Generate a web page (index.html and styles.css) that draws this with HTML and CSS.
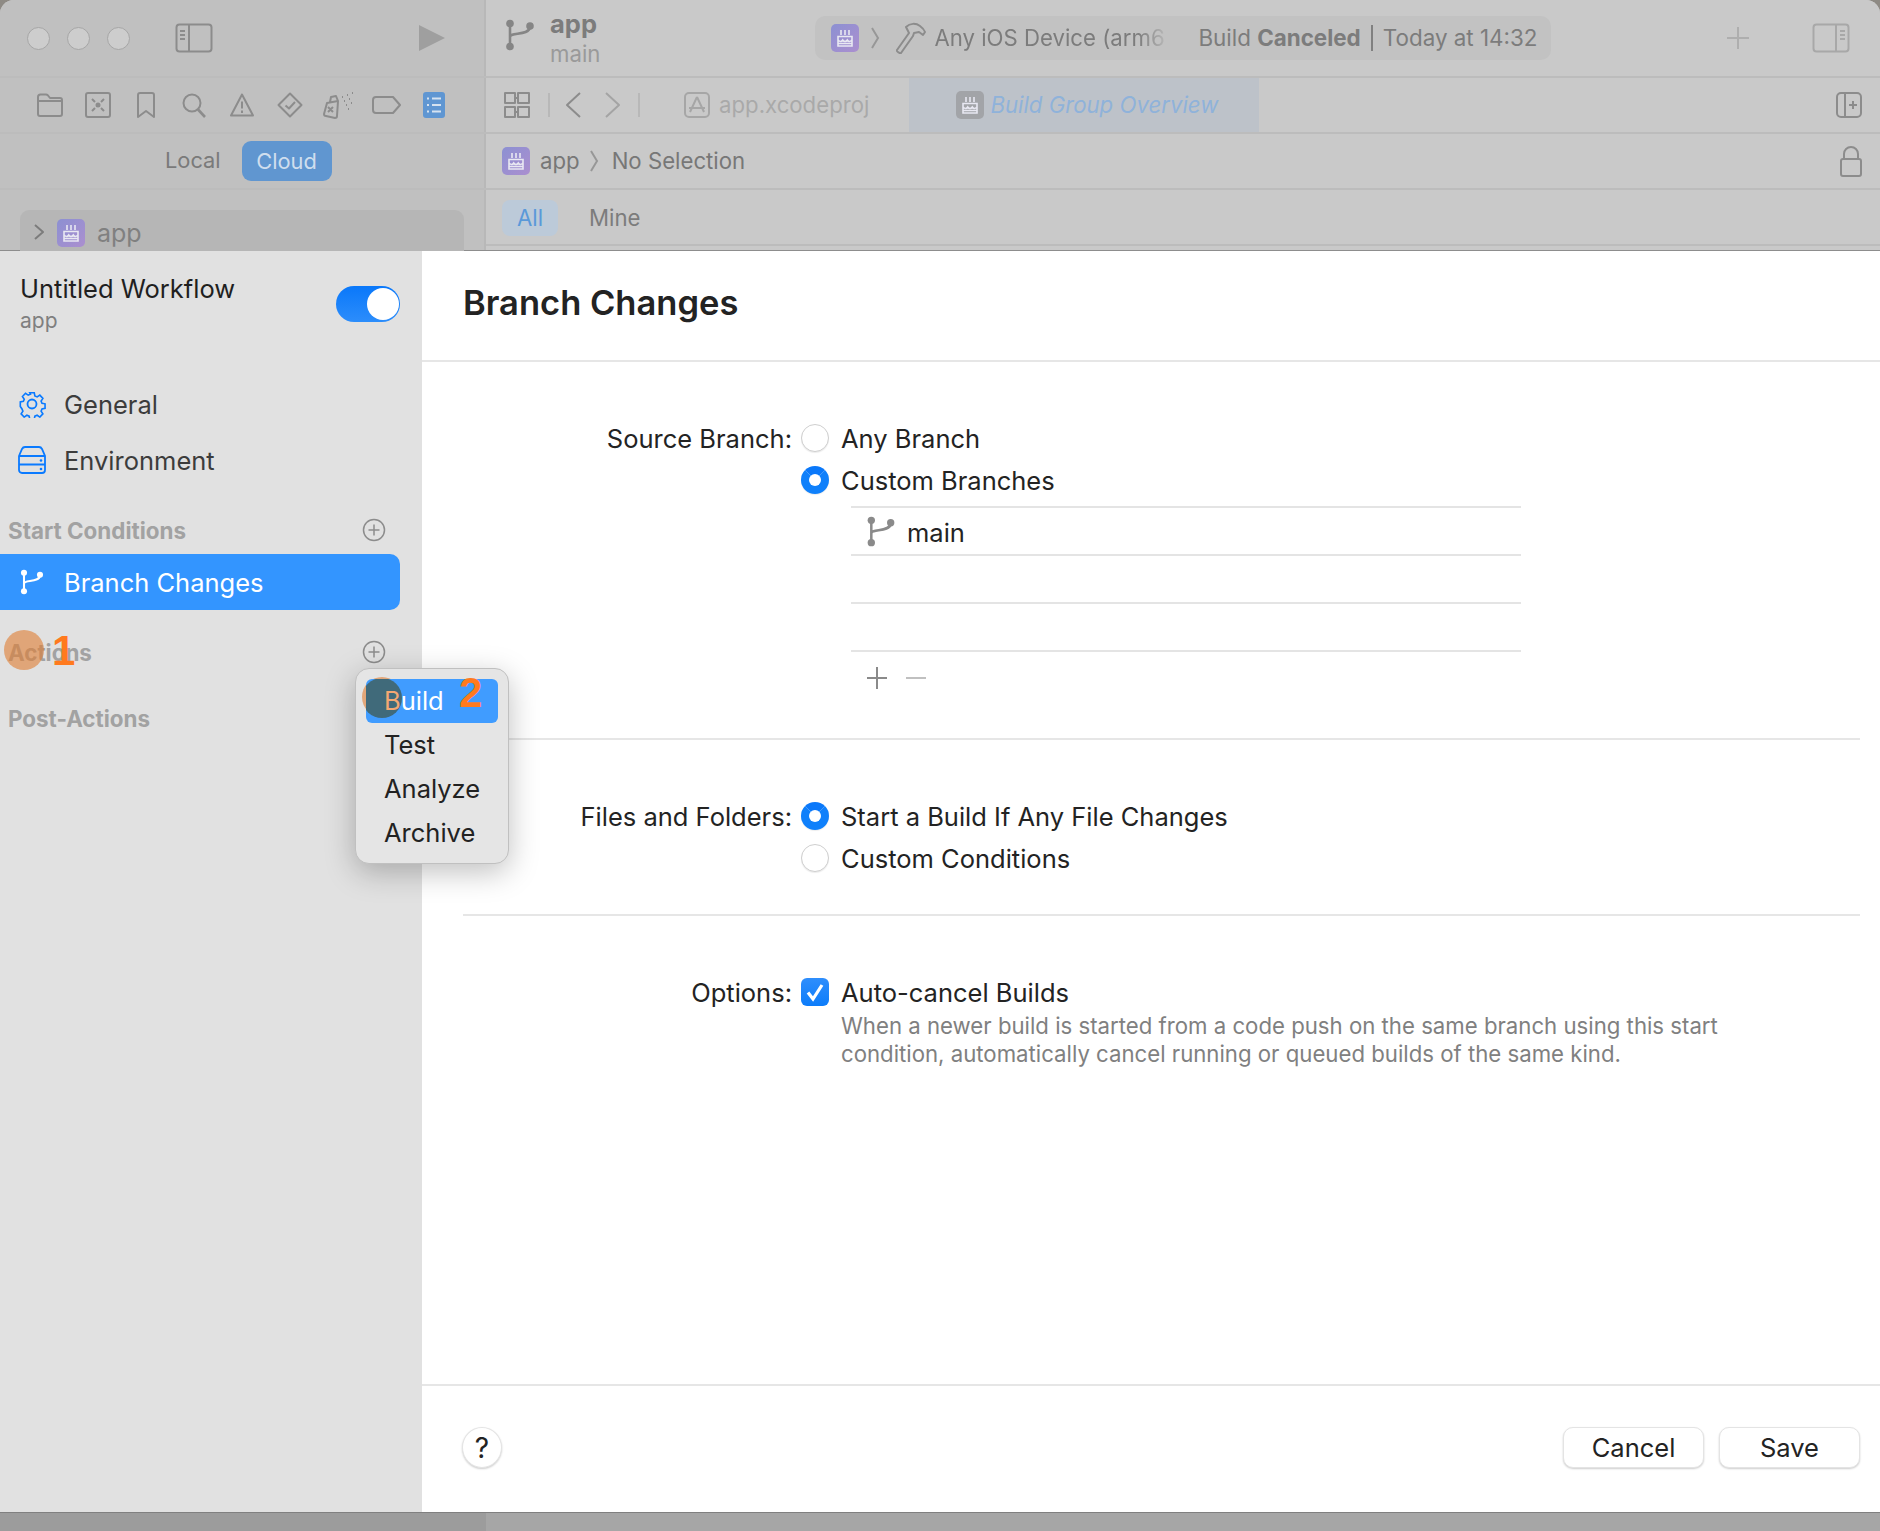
FILE: index.html
```html
<!DOCTYPE html>
<html lang="en">
<head>
    <meta charset="UTF-8">
    <meta name="viewport" content="width=device-width, initial-scale=1.0">
    <title>Branch Changes</title>
    <link rel="stylesheet" href="styles.css">
</head>
<body>

<svg class="defs" width="0" height="0">
    <defs>
        <linearGradient id="cakeFill" x1="0" y1="0" x2="1" y2="1">
            <stop offset="0" stop-color="#8c90d2"/>
            <stop offset="1" stop-color="#ab8fcf"/>
        </linearGradient>
        <symbol id="cake" viewBox="0 0 28 28">
            <g fill="none" stroke="#e8e8f2" stroke-width="1.600">
                <path d="M10 6v5M14 6v5M18 6v5"/>
                <path d="M7 12.500h14v9.500H7zM7 16c2 2 3.500 2 4.700 0 1.300 2 3.300 2 4.600 0 1.200 2 2.700 2 4.700 0M7 19.500h14"/>
            </g>
        </symbol>
        <symbol id="branch" viewBox="0 0 30 32">
            <g fill="none" stroke="currentColor" stroke-width="2.600">
                <path d="M5 5v22M5 18c0-5 19-1 20-10"/>
            </g>
            <circle cx="5" cy="4.500" r="3.800" fill="currentColor"/>
            <circle cx="5" cy="27.500" r="3.800" fill="currentColor"/>
            <circle cx="25" cy="7" r="3.800" fill="currentColor"/>
        </symbol>
        <symbol id="plusCircle" viewBox="0 0 24 24">
            <g fill="none" stroke="#8c8c8c" stroke-width="1.500">
                <circle cx="12" cy="12" r="10.500"/>
                <path d="M12 6.500v11M6.500 12h11"/>
            </g>
        </symbol>
        <symbol id="crumb" viewBox="0 0 10 22">
            <path d="M2 1l6 10-6 10" fill="none" stroke="#979797" stroke-width="2"/>
        </symbol>
    </defs>
</svg>

<div class="window">
    <div class="backdrop">
        <div class="bar bar-tool">
            <div class="bar-left">
                <div class="lights"><i></i><i></i><i></i></div>
                <svg class="ico side-toggle" width="38" height="30" viewBox="0 0 38 30"><rect x="1.500" y="1.500" width="35" height="27" rx="3"/><path d="M14 2v26M5 8h5M5 12h5M5 16h5"/></svg>
                <svg class="play" width="28" height="30" viewBox="0 0 28 30"><path d="M1 2l26 13L1 28z"/></svg>
            </div>
            <div class="bar-right">
                <svg class="repo-ico" width="30" height="32"><use href="#branch"/></svg>
                <div class="repo">
                    <b>app</b>
                    <span>main</span>
                </div>
                <div class="status">
                    <svg class="cake" width="28" height="28"><rect width="28" height="28" rx="5" fill="url(#cakeFill)"/><use href="#cake"/></svg>
                    <svg class="crumb-sep" width="10" height="22"><use href="#crumb"/></svg>
                    <svg class="ico hammer" width="30" height="32" viewBox="0 0 30 32"><path d="M1 28L13 11 10 5c4-4 10-4 14-1 2 1.500 4 3 5 6l-2 3-4-3-5 1-1 3L5 31c-1 1-5-2-4-3z"/></svg>
                    <span class="device">Any iOS Device (arm6</span>
                    <span class="build">Build <b>Canceled</b> <em></em> Today at 14:32</span>
                </div>
                <div class="tool-end">
                    <svg class="ico" width="24" height="24" viewBox="0 0 24 24"><path d="M12 1v22M1 12h22"/></svg>
                    <svg class="ico" width="38" height="30" viewBox="0 0 38 30"><rect x="1.500" y="1.500" width="35" height="27" rx="3"/><path d="M24 2v26M28 8h5M28 12h5M28 16h5"/></svg>
                </div>
            </div>
        </div>

        <div class="bar bar-tabs">
            <div class="bar-left nav-icons">
                <svg class="ico" width="26" height="24" viewBox="0 0 26 24"><path d="M1 21V4c0-1.500 1-2.500 2.500-2.500H9c1 0 1.500.5 2 1L13 5h10c1.200 0 2 .8 2 2v14c0 1-.8 2-2 2H3c-1.200 0-2-1-2-2zM1 8h24"/></svg>
                <svg class="ico" width="26" height="26" viewBox="0 0 26 26"><rect x="1" y="1" width="24" height="24" rx="2"/><circle cx="13" cy="13" r="2.500" fill="#8c8c8c" stroke="none"/><path d="M7 7l3 3M19 7l-3 3M7 19l3-3M19 19l-3-3"/></svg>
                <svg class="ico" width="18" height="26" viewBox="0 0 18 26"><path d="M3 1h12c1 0 2 1 2 2v22l-8-6-8 6V3c0-1 1-2 2-2z"/></svg>
                <svg class="ico" width="24" height="25" viewBox="0 0 24 25"><circle cx="10" cy="10" r="8.500"/><path d="M16 16.500l7 7.500" stroke-width="2.600"/></svg>
                <svg class="ico" width="24" height="24" viewBox="0 0 24 24"><path d="M12 1.500L1 22.500h22zM12 8.500v7M12 17.500v2.500"/></svg>
                <svg class="ico" width="26" height="26" viewBox="0 0 26 26"><path d="M13 1.500L24.500 13 13 24.500 1.500 13zM8.500 13.500l3.500 3 6-6.500"/></svg>
                <svg class="ico" width="31" height="27" viewBox="0 0 31 27"><path d="M4 11l11-2-1 15c0 1-1 2-2 2l-9-2c-1 0-2-1-2-2zM7 10l1-5 5-1 2 5M5 15l5 5M10 15l-5 5"/><path class="dots" d="M19 5h1M24 3h1M29 1h1M21 9h1M26 7h1M23 13h1M28 11h1M25 17h1"/></svg>
                <svg class="ico" width="29" height="18" viewBox="0 0 29 18"><path d="M4 1h17l7 8-7 8H4c-1.500 0-3-1-3-3V4c0-2 1.500-3 3-3z"/></svg>
                <svg class="list-ico" width="22" height="26" viewBox="0 0 22 26"><rect width="22" height="26" rx="3" fill="#5f96d2"/><path d="M4 6.500h2M9 6.500h9M4 13h2M9 13h9M4 19.500h2M9 19.500h9" stroke="#d5e2f0" stroke-width="2"/></svg>
            </div>
            <div class="bar-right">
                <svg class="ico grid-ico" width="26" height="26" viewBox="0 0 26 26"><path d="M1 1h10v10H1zM14 1h11v10H14zM1 15h10v10H1zM14 15h11v10H14zM11 6h3M14 20h-3"/></svg>
                <span class="vrule rule-a"></span>
                <svg class="ico nav-back" width="18" height="26" viewBox="0 0 18 26"><path d="M16 1L3 13l13 12"/></svg>
                <svg class="ico nav-next" width="18" height="26" viewBox="0 0 18 26"><path d="M2 1l13 12L2 25"/></svg>
                <span class="vrule rule-b"></span>
                <div class="tab">
                    <svg class="ico" width="26" height="26" viewBox="0 0 26 26"><rect x="1" y="1" width="24" height="24" rx="4"/><path d="M13 5L6 20M13 5l7 15M5 16h16"/></svg>
                    <span>app.xcodeproj</span>
                </div>
                <div class="tab tab-active">
                    <svg class="cake-grey" width="28" height="28"><rect width="28" height="28" rx="5" fill="#a2a4a8"/><use href="#cake"/></svg>
                    <span>Build Group Overview</span>
                </div>
                <svg class="ico tab-end" width="26" height="26" viewBox="0 0 26 26"><rect x="1" y="1" width="24" height="24" rx="4"/><path d="M9 1v24M13 13h8M17 9v8"/></svg>
            </div>
        </div>

        <div class="bar bar-path">
            <div class="bar-left seg">
                <span>Local</span>
                <span class="seg-on">Cloud</span>
            </div>
            <div class="bar-right">
                <svg class="cake" width="28" height="28"><rect width="28" height="28" rx="5" fill="url(#cakeFill)"/><use href="#cake"/></svg>
                <span class="path-name">app</span>
                <svg class="crumb-sep" width="10" height="22"><use href="#crumb"/></svg>
                <span class="path-name">No Selection</span>
                <svg class="ico lock" width="24" height="32" viewBox="0 0 24 32"><rect x="2" y="14" width="20" height="17" rx="2"/><path d="M5 14V9a7 7 0 0 1 14 0v5"/></svg>
            </div>
        </div>

        <div class="bar bar-filter">
            <div class="bar-left">
                <div class="app-row">
                    <svg class="ico" width="12" height="18" viewBox="0 0 12 18"><path d="M2 2l8 7-8 7"/></svg>
                    <svg class="cake" width="28" height="28"><rect width="28" height="28" rx="5" fill="url(#cakeFill)"/><use href="#cake"/></svg>
                    <span>app</span>
                </div>
            </div>
            <div class="bar-right">
                <span class="filter-on">All</span>
                <span class="filter">Mine</span>
            </div>
        </div>
    </div>

    <div class="dialog">
        <aside class="sidebar">
            <div class="wf-head">
                <div>
                    <div class="wf-title">Untitled Workflow</div>
                    <div class="wf-sub">app</div>
                </div>
                <span class="toggle"></span>
            </div>

            <div class="side-item">
                <svg width="28" height="28" viewBox="0 0 28 28"><g fill="none" stroke="#0a7aff" stroke-width="1.800"><circle cx="14" cy="14" r="4.500"/><path d="M11.500 1.500h5l.7 3.600 2.500 1 3-2 3.400 3.600-2 3 1 2.400 3.400.7v5l-3.400.7-1 2.400 2 3-3.400 3.600-3-2-2.500 1-.7 3.400h-5l-.7-3.400-2.500-1-3 2-3.400-3.600 2-3-1-2.400L1 16.800v-5l3.400-.7 1-2.400-2-3 3.400-3.600 3 2 2.500-1z" transform="translate(1.400 1.400) scale(.9)"/></g></svg>
                <span>General</span>
            </div>
            <div class="side-item">
                <svg width="28" height="28" viewBox="0 0 28 28"><g fill="none" stroke="#0a7aff" stroke-width="1.800"><path d="M1 10l3-7c.5-1 1.500-2 3-2h14c1.500 0 2.500 1 3 2l3 7v14a3 3 0 0 1-3 3H4a3 3 0 0 1-3-3zM1 10h26M1 18.500h26"/></g><circle cx="23" cy="14.500" r="1.300" fill="#0a7aff"/><circle cx="23" cy="23" r="1.300" fill="#0a7aff"/></svg>
                <span>Environment</span>
            </div>

            <div class="side-group group-start">
                <span>Start Conditions</span>
                <svg width="24" height="24"><use href="#plusCircle"/></svg>
            </div>
            <div class="side-item side-active">
                <svg width="24" height="26"><use href="#branch"/></svg>
                <span>Branch Changes</span>
            </div>
            <div class="side-group group-actions">
                <span>Actions</span>
                <svg width="24" height="24"><use href="#plusCircle"/></svg>
            </div>
            <div class="side-group group-post">
                <span>Post-Actions</span>
            </div>
        </aside>

        <main class="main">
            <h1 class="title">Branch Changes</h1>

            <div class="form">
                <section class="sect sect-source">
                    <div class="row">
                        <span class="lbl">Source Branch:</span>
                        <span class="radio"></span>
                        <span>Any Branch</span>
                    </div>
                    <div class="row">
                        <span class="lbl"></span>
                        <span class="radio radio-on"></span>
                        <span>Custom Branches</span>
                    </div>
                    <div class="branch-list">
                        <div class="branch-row">
                            <svg width="30" height="31"><use href="#branch"/></svg>
                            <span>main</span>
                        </div>
                        <div class="branch-row"></div>
                        <div class="branch-row"></div>
                    </div>
                    <div class="list-tools">
                        <svg width="20" height="22" viewBox="0 0 20 22"><path d="M10 0v22M0 11h20" stroke="#8a8a8a" stroke-width="2"/></svg>
                        <svg width="20" height="22" viewBox="0 0 20 22"><path d="M0 11h20" stroke="#c0c0c0" stroke-width="2"/></svg>
                    </div>
                </section>

                <section class="sect sect-files">
                    <div class="row">
                        <span class="lbl">Files and Folders:</span>
                        <span class="radio radio-on"></span>
                        <span>Start a Build If Any File Changes</span>
                    </div>
                    <div class="row">
                        <span class="lbl"></span>
                        <span class="radio"></span>
                        <span>Custom Conditions</span>
                    </div>
                </section>

                <section class="sect-options">
                    <div class="row">
                        <span class="lbl">Options:</span>
                        <span class="check">
                            <svg width="20" height="20" viewBox="0 0 20 20"><path d="M3 10.500l5 6.500L17 3" fill="none" stroke="#fff" stroke-width="3.200"/></svg>
                        </span>
                        <span>Auto-cancel Builds</span>
                    </div>
                    <p class="hint">When a newer build is started from a code push on the same branch using this start<br>condition, automatically cancel running or queued builds of the same kind.</p>
                </section>
            </div>

            <footer class="foot">
                <button class="btn-help">?</button>
                <div class="foot-btns">
                    <button class="btn">Cancel</button>
                    <button class="btn">Save</button>
                </div>
            </footer>
        </main>

        <div class="menu">
            <i class="spot spot-two"></i>
            <div class="menu-item menu-on"><i class="spot-in"></i><span><span class="spot-letter">B</span>uild</span></div>
            <div class="menu-item">Test</div>
            <div class="menu-item">Analyze</div>
            <div class="menu-item">Archive</div>
        </div>
        <i class="spot spot-one"></i>
        <span class="step step-one">1</span>
        <span class="step step-two">2</span>
    </div>

    <div class="strip"><div></div><div></div></div>
</div>

</body>
</html>
```

FILE: styles.css
```css
* {
    box-sizing: border-box;
}
body {
    margin: 0;
    background-color: #8e8a84;
    color: #232323;
    font-family: Inter, "Noto Sans", sans-serif;
    font-size: 25.5px;
}
.defs {
    position: absolute;
}
.window {
    width: 1880px;
    height: 1531px;
    display: flex;
    flex-direction: column;
    overflow: hidden;
    border-radius: 14px 14px 0 0;
    background-color: #c9c9c9;
}

/* dimmed xcode window behind the sheet */
.backdrop {
    height: 251px;
    flex: none;
    display: flex;
    flex-direction: column;
    color: #7c7c7c;
    font-size: 22.2px;
    border-bottom: 1px solid #8d8d8d;
}
.bar {
    display: flex;
    flex: none;
    border-bottom: 2px solid #bcbcbc;
}
.bar-tool { height: 78px; }
.bar-tabs { height: 56px; }
.bar-path { height: 56px; }
.bar-filter { height: 60px; border-bottom: none; }
.bar-left {
    width: 486px;
    flex: none;
    display: flex;
    align-items: center;
    background-color: #c0c0c0;
    border-right: 2px solid #b8b8b8;
}
.bar-right {
    flex: 1;
    display: flex;
    align-items: center;
    padding-left: 16px;
    background-color: #c9c9c9;
}
.ico {
    flex: none;
    fill: none;
    stroke: #8c8c8c;
    stroke-width: 2;
    stroke-linejoin: round;
}
.cake, .cake-grey, .crumb-sep {
    flex: none;
}
.lights {
    display: flex;
    gap: 17px;
    padding-left: 27px;
}
.lights i {
    width: 23px;
    height: 23px;
    border-radius: 50%;
    background-color: #cdcdcd;
    border: 1px solid #a6a6a6;
}
.side-toggle {
    margin-left: 45px;
}
.play {
    margin-left: 205px;
    fill: #9f9f9f;
}
.repo-ico {
    color: #858585;
    flex: none;
    margin: -6px 0 0 3px;
}
.repo {
    margin-left: 15px;
    display: flex;
    flex-direction: column;
    line-height: 30px;
    margin-top: 1px;
}
.repo b {
    font-size: 25.5px;
}
.repo span {
    color: #9a9a9a;
}
.status {
    width: 736px;
    height: 44px;
    margin-left: 215px;
    padding-left: 16px;
    display: flex;
    align-items: center;
    background-color: #c2c2c2;
    border-radius: 10px;
    margin-top: -1px;
}
.status .crumb-sep {
    margin: 0 16px 0 11px;
}
.device {
    width: 232px;
    margin-left: 8px;
    white-space: nowrap;
    overflow: hidden;
    -webkit-mask-image: linear-gradient(to right, #000 88%, transparent 102%);
    mask-image: linear-gradient(to right, #000 88%, transparent 102%);
}
.build {
    margin-left: 32px;
    font-size: 22.4px;
    white-space: nowrap;
}
.build em {
    display: inline-block;
    width: 1.500px;
    height: 26px;
    margin: 0 4px;
    vertical-align: -5px;
    background-color: #808080;
}
.tool-end {
    margin-left: auto;
    padding-right: 30px;
    display: flex;
    align-items: center;
    gap: 62px;
}
.tool-end svg:first-child {
    stroke: #aeaeae;
}
.tool-end svg:last-child {
    stroke: #a8a8a8;
}

.nav-icons {
    display: grid;
    grid-template-columns: repeat(9, 48px);
    justify-items: center;
    align-items: center;
    padding-left: 26px;
}
.nav-icons .dots {
    stroke-dasharray: 1 1;
}
.grid-ico {
    margin-left: 2px;
}
.vrule {
    width: 2px;
    height: 24px;
    flex: none;
    background-color: #b8b8b8;
}
.rule-a { margin-left: 18px; }
.rule-b { margin-left: 16px; }
.nav-back {
    margin-left: 14px;
}
.nav-next {
    margin-left: 22px;
    stroke: #a4a4a4;
}
.tab {
    display: flex;
    align-items: center;
    height: 100%;
    margin-left: 44px;
    gap: 9px;
    color: #a9a9a9;
}
.tab span {
    margin-top: -2px;
}
.tab .ico {
    stroke: #a6a6a6;
}
.tab-active {
    width: 350px;
    padding-left: 47px;
    margin-left: 40px;
    gap: 6px;
    background-color: #bdc2c9;
    color: #8fb2da;
    font-style: italic;
}
.tab-end {
    margin-left: auto;
    margin-right: 18px;
}

.seg {
    padding-left: 165px;
    gap: 21px;
    font-size: 21.8px;
    color: #7a7a7a;
}
.seg span:first-child {
    margin-top: -2px;
}
.seg-on {
    width: 90px;
    height: 40px;
    line-height: 40px;
    text-align: center;
    margin-top: -1px;
    background-color: #6096d0;
    color: #cfdeee;
    border-radius: 9px;
}
.path-name {
    margin-top: -2px;
    color: #777;
}
.bar-path .cake {
    margin-right: 10px;
}
.bar-path .crumb-sep {
    margin: 0 13px 0 9px;
}
.lock {
    margin-left: auto;
    margin-right: 17px;
}

.bar-filter .bar-left {
    align-items: flex-start;
}
.app-row {
    width: 444px;
    height: 50px;
    margin: 20px 0 0 20px;
    padding-left: 13px;
    display: flex;
    align-items: flex-start;
    gap: 12px;
    background-color: #b6b6b6;
    border-radius: 9px;
    color: #808080;
    font-size: 25px;
}
.app-row .ico {
    margin-top: 13px;
    stroke: #7c7c7c;
}
.app-row .cake {
    margin-top: 9px;
}
.app-row span {
    margin-top: 8px;
}
.bar-filter .bar-right {
    align-items: flex-start;
    padding-top: 10px;
    border-bottom: 2px solid #bcbcbc;
    height: 56px;
}
.filter-on {
    width: 56px;
    height: 36px;
    line-height: 36px;
    text-align: center;
    background-color: #bccad9;
    color: #5a99d9;
    border-radius: 8px;
}
.filter {
    margin-left: 31px;
    line-height: 36px;
    color: #7c7c7c;
}

/* sheet */
.dialog {
    flex: 1;
    display: flex;
    position: relative;
    min-height: 0;
}
.sidebar {
    width: 422px;
    flex: none;
    background-color: #e1e1e1;
}
.wf-head {
    display: flex;
    justify-content: space-between;
    padding: 22px 22px 0 20px;
    height: 125px;
}
.wf-title {
    color: #1f1f1f;
    line-height: 32px;
}
.wf-sub {
    color: #7f7f7f;
    font-size: 21px;
    line-height: 32px;
}
.toggle {
    width: 64px;
    height: 36px;
    margin-top: 13px;
    position: relative;
    border-radius: 18px;
    background: linear-gradient(#0a78fa, #2c8dfb);
}
.toggle::after {
    content: "";
    position: absolute;
    right: 1px;
    top: 2px;
    width: 32px;
    height: 32px;
    border-radius: 50%;
    background-color: #fff;
}
.side-item {
    display: flex;
    align-items: center;
    gap: 18px;
    height: 56px;
    padding-left: 18px;
    color: #3c3c3c;
}
.side-group {
    display: flex;
    align-items: center;
    justify-content: space-between;
    padding: 0 36px 0 8px;
    height: 24px;
    color: #a2a2a2;
    font-weight: 700;
    font-size: 22.400px;
}
.group-start { margin-top: 30px; }
.group-actions { margin-top: 30px; }
.group-post { margin-top: 42px; }
.side-active {
    width: 400px;
    margin-top: 12px;
    padding-left: 20px;
    gap: 20px;
    border-radius: 0 10px 10px 0;
    background-color: #3395ff;
    color: #fff;
}

.main {
    flex: 1;
    display: flex;
    flex-direction: column;
    background-color: #fff;
}
.title {
    margin: 0;
    height: 111px;
    padding: 30px 0 0 41px;
    font-size: 34.500px;
    line-height: 44px;
    font-weight: 600;
    color: #232323;
    border-bottom: 2px solid #e6e6e6;
}
.form {
    flex: 1;
}
.sect {
    margin: 0 20px 0 41px;
    border-bottom: 2px solid #e6e6e6;
}
.sect-source {
    height: 378px;
    padding-top: 55px;
}
.sect-files {
    height: 176px;
    padding-top: 55px;
}
.sect-options {
    padding-top: 55px;
    margin: 0 20px 0 41px;
}
.row {
    display: flex;
    align-items: center;
    height: 42px;
}
.lbl {
    width: 329px;
    flex: none;
    text-align: right;
    white-space: nowrap;
}
.radio {
    width: 28px;
    height: 28px;
    flex: none;
    margin: 0 12px 0 9px;
    background-color: #fff;
    border: 1px solid #cfcfcf;
    border-radius: 50%;
    box-shadow: 0 1px 1px rgba(0, 0, 0, 0.08);
}
.radio-on {
    border: 8px solid #0f80fb;
    border-top-color: #0a78fa;
}
.check {
    width: 28px;
    height: 28px;
    flex: none;
    margin: 0 12px 0 9px;
    display: flex;
    align-items: center;
    justify-content: center;
    background: linear-gradient(#2f8efc, #0c7cfa);
    border-radius: 6px;
}
.branch-list {
    margin: 5px 0 0 388px;
    width: 670px;
    border-top: 2px solid #e4e4e4;
}
.branch-row {
    height: 48px;
    display: flex;
    align-items: center;
    gap: 11px;
    padding-left: 15px;
    border-bottom: 2px solid #e4e4e4;
}
.branch-row span {
    margin-top: 3px;
}
.branch-row svg {
    color: #8a8a8a;
}
.list-tools {
    display: flex;
    gap: 19px;
    margin: 15px 0 0 404px;
}
.hint {
    margin: -1px 0 0 378px;
    font-size: 22.200px;
    line-height: 28px;
    color: #808080;
    white-space: nowrap;
}
.foot {
    height: 128px;
    margin-top: auto;
    display: flex;
    justify-content: space-between;
    padding: 41px 20px 0 40px;
    border-top: 2px solid #e6e6e6;
}
.btn, .btn-help {
    height: 41px;
    padding: 0;
    font: inherit;
    color: #232323;
    background-color: #fff;
    border: 1px solid #e4e4e4;
    box-shadow: 0 1px 2px rgba(0, 0, 0, 0.2);
}
.btn-help {
    width: 40px;
    border-radius: 50%;
    font-size: 28px;
}
.foot-btns {
    display: flex;
    gap: 15px;
}
.btn {
    width: 141px;
    border-radius: 10px;
}
.strip {
    height: 19px;
    flex: none;
    display: flex;
    border-top: 1px solid #808080;
    background-color: #a6a6a6;
}
.strip div:first-child {
    width: 486px;
    background-color: #9c9c9c;
}

/* popup + tutorial marks */
.menu {
    position: absolute;
    left: 355px;
    top: 417px;
    width: 154px;
    height: 196px;
    padding: 10px;
    background-color: #e5e5e5;
    border: 1px solid #c0c0c0;
    border-radius: 14px;
    box-shadow: 0 8px 30px rgba(0, 0, 0, 0.25);
}
.menu-item {
    height: 44px;
    line-height: 44px;
    padding-left: 18px;
    position: relative;
    overflow: hidden;
    color: #222;
}
.menu-on {
    background-color: #409cff;
    color: #fff;
    border-radius: 6px;
}
.menu-on span {
    position: relative;
}
.spot-in {
    position: absolute;
    left: -4px;
    top: -1px;
    width: 40px;
    height: 40px;
    border-radius: 50%;
    background-color: #406a7a;
}
.spot-letter {
    color: #f3a873;
}
.spot {
    position: absolute;
    width: 40px;
    height: 40px;
    border-radius: 50%;
    background-color: rgba(224, 125, 50, 0.6);
}
.spot-one {
    left: 4px;
    top: 379px;
}
/* sits under the selected row, only its rim shows */
.spot-two {
    left: 6px;
    top: 8px;
}
.step {
    position: absolute;
    color: #ff7a1e;
    font-family: "Liberation Sans", sans-serif;
    font-weight: 700;
    font-size: 42px;
    line-height: 42px;
}
.step-one {
    left: 52px;
    top: 379px;
}
.step-two {
    left: 459px;
    top: 421px;
}
```
